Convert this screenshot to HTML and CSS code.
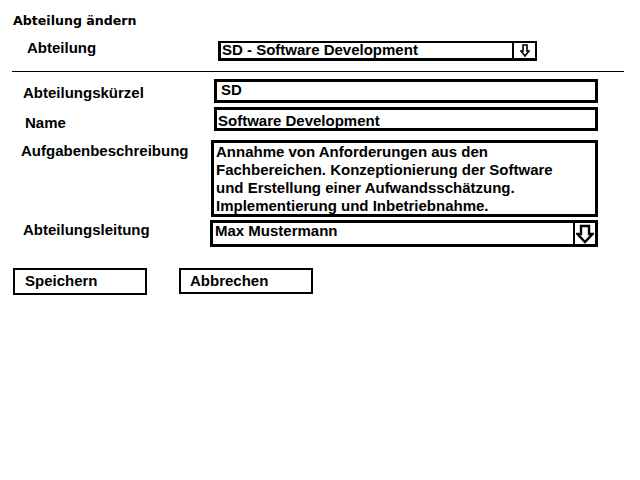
FILE: index.html
```html
<!DOCTYPE html>
<html lang="de">
<head>
<meta charset="utf-8">
<title>Abteilung ändern</title>
<link rel="stylesheet" href="styles.css">
</head>
<body>
<div class="page">
  <div class="title">Abteilung ändern</div>

  <div class="row row-dept">
    <div class="lbl lbl-dept">Abteilung</div>
    <div class="select select-dept">
      <span class="val">SD - Software Development</span>
      <span class="arrow arrow-small">
        <svg width="10" height="13" viewBox="0 0 10 13"><path d="M3 1 H7 V7 H9 L5 12 L1 7 H3 Z" fill="#fff" stroke="#000" stroke-width="1.6"/></svg>
      </span>
    </div>
  </div>

  <div class="divider"></div>

  <div class="row row-short">
    <div class="lbl lbl-short">Abteilungskürzel</div>
    <div class="box box-short">SD</div>
  </div>

  <div class="row row-name">
    <div class="lbl lbl-name">Name</div>
    <div class="box box-name">Software Development</div>
  </div>

  <div class="row row-desc">
    <div class="lbl lbl-desc">Aufgabenbeschreibung</div>
    <div class="box box-desc">Annahme von Anforderungen aus den<br>Fachbereichen. Konzeptionierung der Software<br>und Erstellung einer Aufwandsschätzung.<br>Implementierung und Inbetriebnahme.</div>
  </div>

  <div class="row row-lead">
    <div class="lbl lbl-lead">Abteilungsleitung</div>
    <div class="select select-lead">
      <span class="val">Max Mustermann</span>
      <span class="arrow arrow-big">
        <svg width="18" height="20" viewBox="0 0 18 20"><path d="M5 2 H13 V10 H16.5 L9 18 L1.5 10 H5 Z" fill="#fff" stroke="#000" stroke-width="2.4"/></svg>
      </span>
    </div>
  </div>

  <div class="buttons">
    <div class="btn btn-save">Speichern</div>
    <div class="btn btn-cancel">Abbrechen</div>
  </div>
</div>
</body>
</html>
```

FILE: styles.css
```css
html, body {
  margin: 0;
  padding: 0;
  background: #fff;
}

.page {
  font-family: "Liberation Sans", Arial, sans-serif;
  font-weight: bold;
  font-size: 15px;
  color: #000;
  width: 640px;
  height: 480px;
}

.title {
  font-family: "DejaVu Sans", Verdana, sans-serif;
  font-size: 12.6px;
  line-height: 16px;
  padding: 13px 0 0 13px;
}

.row {
  display: flex;
  align-items: flex-start;
}

.lbl {
  box-sizing: border-box;
  line-height: 16px;
}

.row-dept { margin-top: 12px; }
.lbl-dept { width: 218px; padding-left: 27px; padding-top: 0; margin-top: -1px; }

.select {
  box-sizing: border-box;
  display: flex;
  align-items: stretch;
  border: 3px solid #000;
}

.select .val {
  flex: 1;
  line-height: 16px;
}

.select-dept {
  width: 319px;
  height: 20px;
  border-width: 2px 2px 3px 3px;
}
.select-dept .val { padding-left: 1px; margin-top: -1px; }

.arrow {
  display: flex;
  align-items: center;
  justify-content: center;
  border-left: 2px solid #000;
}
.arrow-small { width: 21px; }
.arrow-big { width: 20px; border-left-width: 2px; }

.divider {
  margin: 10px 0 0 12px;
  width: 612px;
  height: 1px;
  background: #000;
}

.box {
  box-sizing: border-box;
  border: 3px solid #000;
  line-height: 16px;
}

.row-short { margin-top: 7px; }
.lbl-short { width: 214px; padding-left: 23px; padding-top: 6px; }
.box-short { width: 384px; height: 24px; padding: 0 0 0 4px; }

.row-name { margin-top: 4px; }
.lbl-name { width: 214px; padding-left: 25px; padding-top: 8px; }
.box-name { width: 384px; height: 24px; padding: 3px 0 0 1px; }

.row-desc { margin-top: 9px; }
.lbl-desc { width: 211px; padding-left: 21px; padding-top: 3px; }
.box-desc { width: 387px; height: 77px; padding: 0 0 0 2px; line-height: 18px; }

.row-lead { margin-top: 3px; }
.lbl-lead { width: 210px; padding-left: 23px; padding-top: 2px; }
.select-lead { width: 388px; height: 27px; }
.select-lead .val { padding-left: 2px; margin-top: 0; }

.buttons {
  display: flex;
  margin: 21px 0 0 13px;
  gap: 32px;
}

.btn {
  box-sizing: border-box;
  width: 134px;
  height: 27px;
  border: 2px solid #000;
  line-height: 16px;
  padding-top: 3px;
}
.btn-save { padding-left: 10px; }
.btn-cancel { padding-left: 9px; height: 26px; }
```
